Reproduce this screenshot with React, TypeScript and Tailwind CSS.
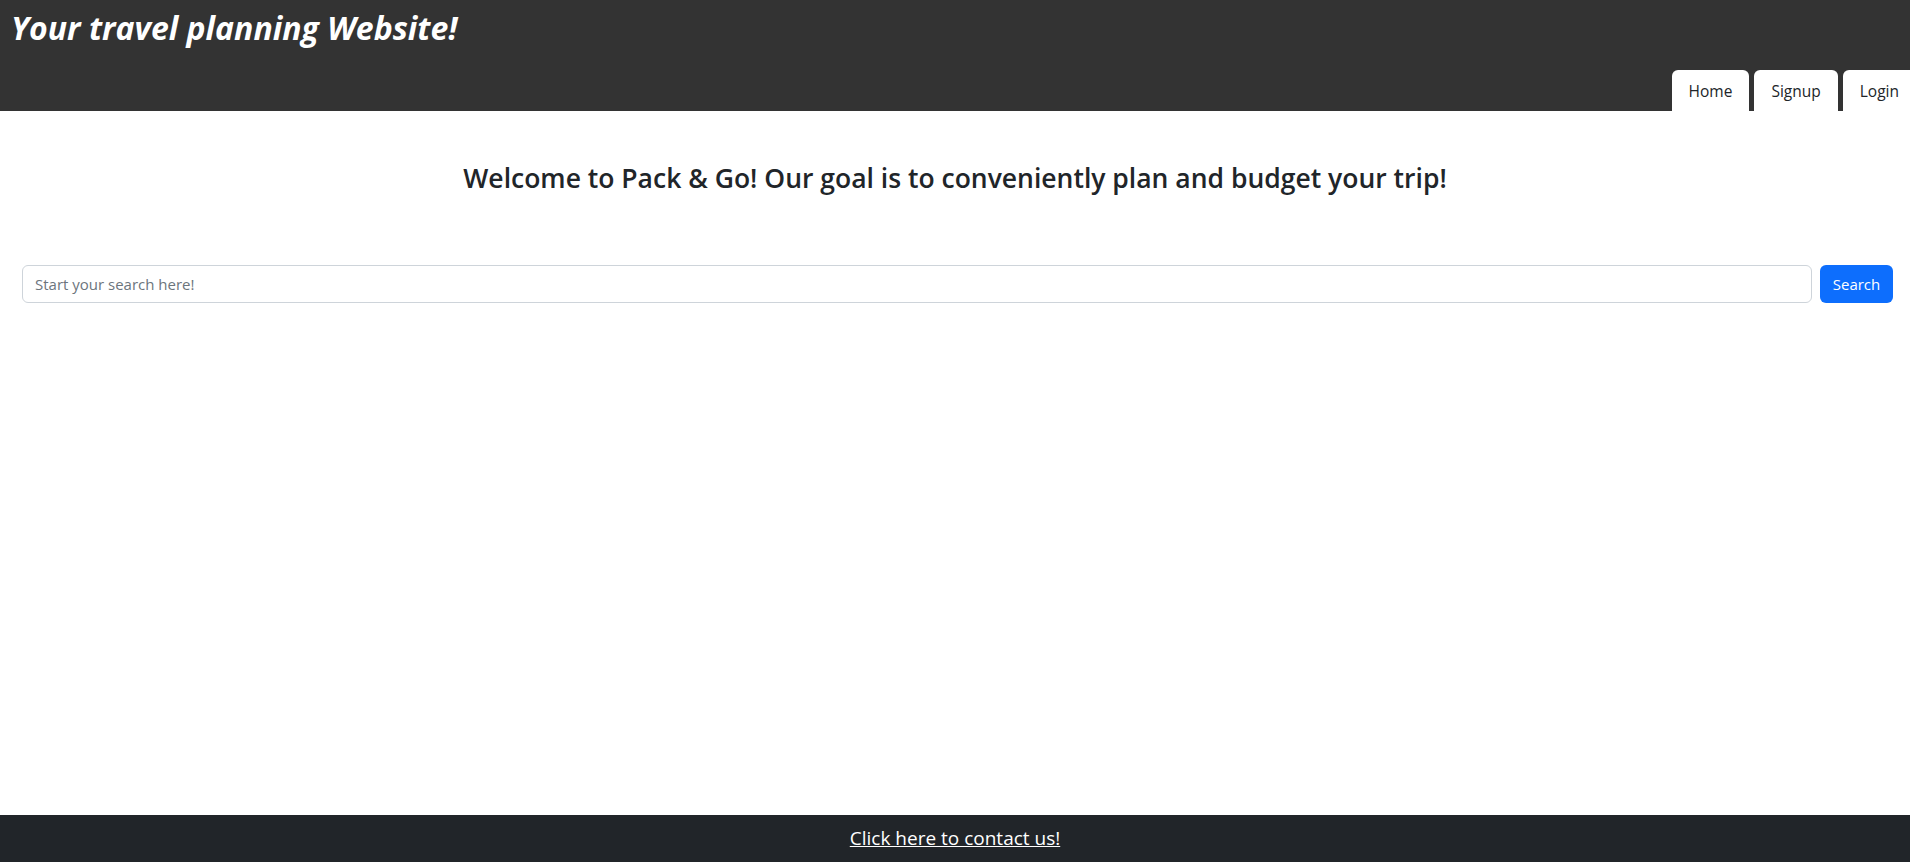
import React from 'react'

const tabs = ['Home', 'Signup', 'Login']

const App = () => {
  return (
    <div className="flex min-h-screen flex-col overflow-x-hidden bg-white font-['Open_Sans',sans-serif] text-[#212529]">
      <header className="flex h-[111px] flex-col justify-between overflow-hidden bg-[#333333]">
        <h1 className="pl-[11px] pt-[8px] text-[32px] font-bold italic leading-[40px] text-white">
          Your travel planning Website!
        </h1>
        <nav className="mr-[-6px] flex justify-end gap-[5px]">
          {tabs.map((t) => (
            <a
              key={t}
              href="/"
              className="rounded-t-md bg-white px-[17px] pb-2 pt-[9px] text-[15.5px] leading-[24px] text-[#212529]"
            >
              {t}
            </a>
          ))}
        </nav>
      </header>

      <main className="flex-1">
        <h3 className="mt-[50px] text-center text-[26.5px] font-semibold leading-[34px]">
          Welcome to Pack &amp; Go! Our goal is to conveniently plan and budget your trip!
        </h3>
        <form className="mt-[70px] flex gap-2 pl-[22px] pr-[17px]" onSubmit={(e) => e.preventDefault()}>
          <input
            type="text"
            placeholder="Start your search here!"
            className="h-[38px] flex-1 rounded-md border border-[#ced4da] px-3 text-[15px] text-[#212529] placeholder:text-[#6c757d] outline-none"
          />
          <button
            type="submit"
            className="h-[38px] w-[73px] rounded-md bg-[#0d6efd] text-[15px] text-white"
          >
            Search
          </button>
        </form>
      </main>

      <footer className="flex h-[47px] items-center justify-center bg-[#212529]">
        <a href="/" className="text-[19px] text-white underline">
          Click here to contact us!
        </a>
      </footer>
    </div>
  )
}

export default App
